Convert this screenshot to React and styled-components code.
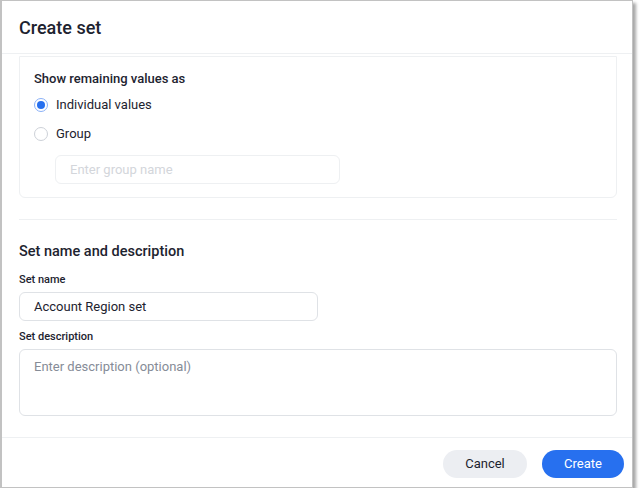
import React from "react";
import styled, { createGlobalStyle } from "styled-components";

const Global = createGlobalStyle`
  html, body { margin: 0; padding: 0; background: #ffffff; }
  body { font-family: Roboto, "Liberation Sans", Arial, sans-serif; color: #1d232f; }
  * { box-sizing: border-box; }
`;

const Dialog = styled.div`
  width: 633px;
  height: 488px;
  background: #fff;
  border: 1px solid #c2c2c2;
  border-left-width: 2px;
  box-shadow: 3px 3px 3px rgba(0, 0, 0, 0.35);
  display: flex;
  flex-direction: column;
`;

const Header = styled.div`
  height: 53px;
  flex-shrink: 0;
  display: flex;
  align-items: center;
  padding: 0 17px;
  border-bottom: 1px solid #eef0f2;
`;

const Title = styled.h1`
  margin: 0;
  font-size: 18px;
  font-weight: 500;
  color: #1d232f;
`;

const Body = styled.div`
  flex: 1;
  padding: 2px 15px 0 17px;
  display: flex;
  flex-direction: column;
  overflow: hidden;
`;

const Card = styled.div`
  border: 1px solid #eef0f2;
  border-radius: 0 0 6px 6px;
  padding: 13px 14px 13px;
  display: flex;
  flex-direction: column;
`;

const CardTitle = styled.div`
  font-size: 13px;
  font-weight: 500;
  line-height: 18px;
  margin-bottom: 7px;
`;

const RadioRow = styled.label`
  display: flex;
  align-items: center;
  gap: 8px;
  height: 20px;
  font-size: 13px;
  line-height: 20px;
  margin-bottom: ${(p) => p.$mb || 0}px;
`;

const RadioDot = styled.span`
  width: 14px;
  height: 14px;
  border-radius: 50%;
  border: 1px solid ${(p) => (p.$checked ? "#8bb1f7" : "#cdd1d8")};
  display: flex;
  align-items: center;
  justify-content: center;
  background: #fff;
  &::after {
    content: "";
    width: 8px;
    height: 8px;
    border-radius: 50%;
    background: ${(p) => (p.$checked ? "#2770ef" : "transparent")};
  }
`;

const GroupInput = styled.div`
  margin-left: 21px;
  width: 285px;
  height: 29px;
  border: 1px solid #eef0f2;
  border-radius: 6px;
  padding: 0 14px;
  display: flex;
  align-items: center;
  font-size: 13px;
  color: #d3d6db;
`;

const Divider = styled.div`
  height: 1px;
  background: #eef0f2;
  margin: 21px 0 22px;
`;

const SectionTitle = styled.h2`
  margin: 0 0 10px;
  font-size: 14.5px;
  font-weight: 500;
  line-height: 20px;
`;

const FieldLabel = styled.div`
  font-size: 11px;
  font-weight: 500;
  line-height: 16px;
  margin-bottom: 4px;
`;

const TextInput = styled.div`
  width: ${(p) => p.$width || "100%"};
  height: ${(p) => p.$height || 29}px;
  border: 1px solid #dfe2e6;
  border-radius: 6px;
  padding: ${(p) => (p.$multi ? "8px 14px" : "0 14px")};
  display: flex;
  align-items: ${(p) => (p.$multi ? "flex-start" : "center")};
  font-size: 13px;
  line-height: 18px;
  color: ${(p) => (p.$placeholder ? "#868c97" : "#1d232f")};
  margin-bottom: ${(p) => p.$mb || 0}px;
`;

const Footer = styled.div`
  flex-shrink: 0;
  height: 50px;
  border-top: 1px solid #eef0f2;
  display: flex;
  justify-content: flex-end;
  align-items: flex-start;
  gap: 15px;
  padding: 12px 8px 0 0;
`;

const Button = styled.button`
  height: 28px;
  width: ${(p) => p.$w}px;
  border: none;
  border-radius: 14px;
  font-family: inherit;
  font-size: 13px;
  padding: 0 0 1px;
  background: ${(p) => (p.$primary ? "#2770ef" : "#eceef2")};
  color: ${(p) => (p.$primary ? "#ffffff" : "#1d232f")};
  cursor: pointer;
`;

export default function App() {
  return (
    <>
      <Global />
      <Dialog>
        <Header>
          <Title>Create set</Title>
        </Header>
        <Body>
          <Card>
            <CardTitle>Show remaining values as</CardTitle>
            <RadioRow $mb={9}>
              <RadioDot $checked />
              Individual values
            </RadioRow>
            <RadioRow $mb={11}>
              <RadioDot />
              Group
            </RadioRow>
            <GroupInput>Enter group name</GroupInput>
          </Card>
          <Divider />
          <SectionTitle>Set name and description</SectionTitle>
          <FieldLabel>Set name</FieldLabel>
          <TextInput $width="299px" $mb={8}>Account Region set</TextInput>
          <FieldLabel>Set description</FieldLabel>
          <TextInput $multi $height={67} $placeholder>
            Enter description (optional)
          </TextInput>
        </Body>
        <Footer>
          <Button $w={84}>Cancel</Button>
          <Button $primary $w={82}>Create</Button>
        </Footer>
      </Dialog>
    </>
  );
}
